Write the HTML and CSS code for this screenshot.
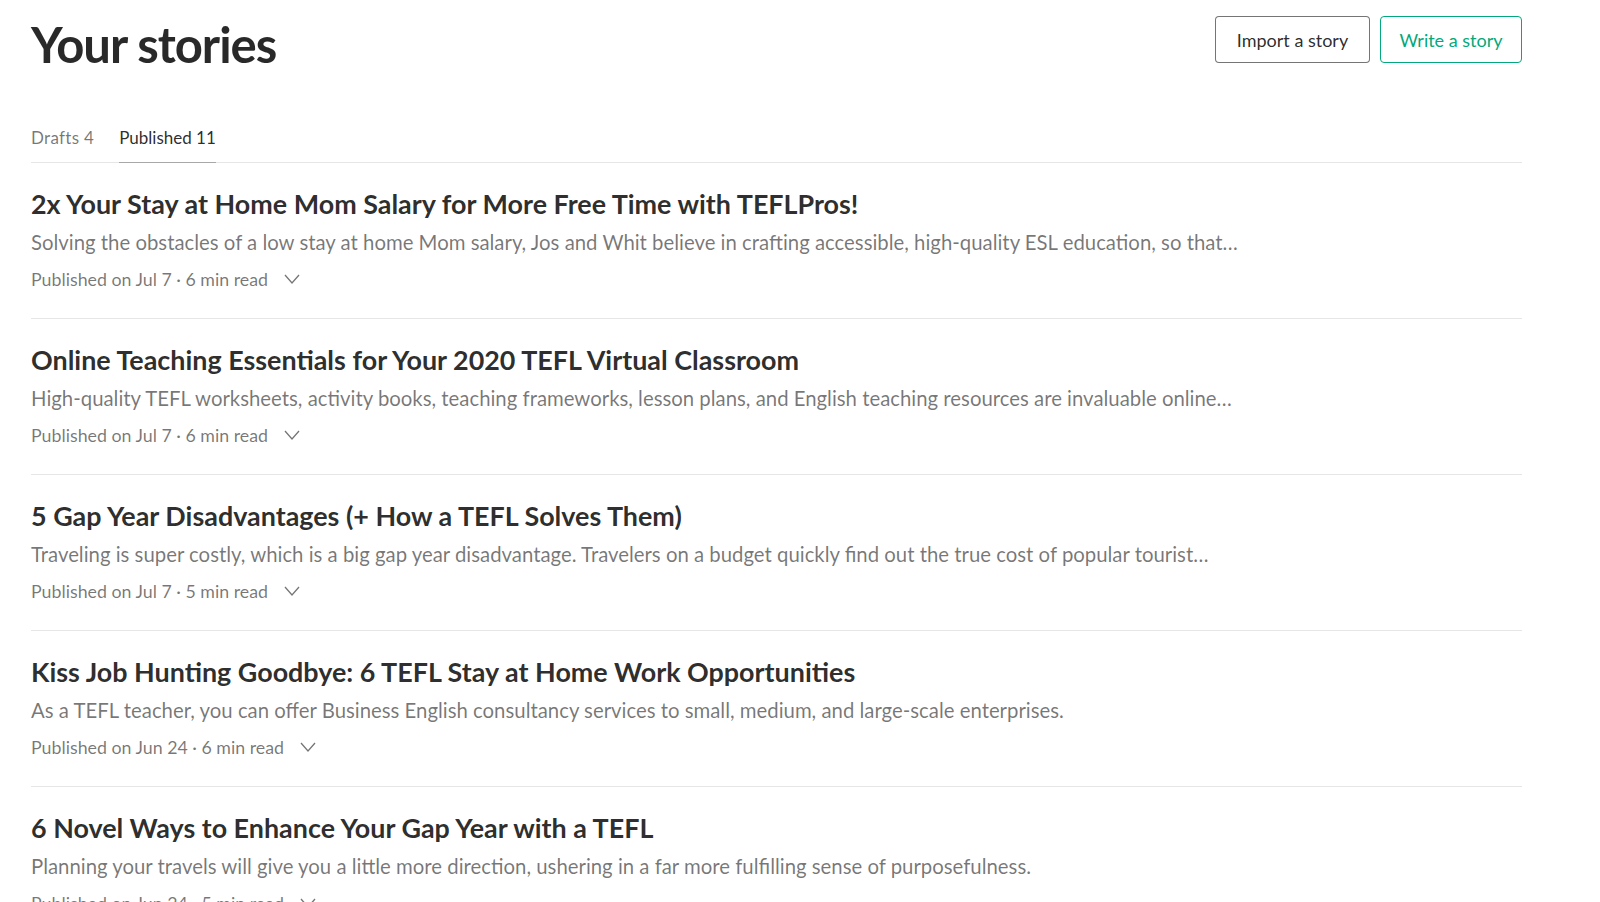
FILE: index.html
```html
<!DOCTYPE html>
<html lang="en">
<head>
    <meta charset="UTF-8">
    <meta name="viewport" content="width=device-width, initial-scale=1.0">
    <title>Your stories</title>
    <link rel="stylesheet" href="styles.css">
</head>
<body>
    <div class="page">
        <header class="page-header">
            <h1>Your stories</h1>
            <div class="actions">
                <button class="btn btn-import">Import a story</button>
                <button class="btn btn-green">Write a story</button>
            </div>
        </header>

        <nav class="tabs">
            <a class="tab" href="#">Drafts 4</a>
            <a class="tab active" href="#">Published 11</a>
        </nav>

        <ul class="stories">
            <li class="story">
                <h3>2x Your Stay at Home Mom Salary for More Free Time with TEFLPros!</h3>
                <p class="excerpt">Solving the obstacles of a low stay at home Mom salary, Jos and Whit believe in crafting accessible, high-quality ESL education, so that…</p>
                <div class="meta">Published on Jul 7 · 6 min read <svg class="chevron" width="16" height="10" viewBox="0 0 16 10"><polyline points="1,1 8,9 15,1"/></svg></div>
            </li>
            <li class="story">
                <h3>Online Teaching Essentials for Your 2020 TEFL Virtual Classroom</h3>
                <p class="excerpt">High-quality TEFL worksheets, activity books, teaching frameworks, lesson plans, and English teaching resources are invaluable online…</p>
                <div class="meta">Published on Jul 7 · 6 min read <svg class="chevron" width="16" height="10" viewBox="0 0 16 10"><polyline points="1,1 8,9 15,1"/></svg></div>
            </li>
            <li class="story">
                <h3>5 Gap Year Disadvantages (+ How a TEFL Solves Them)</h3>
                <p class="excerpt">Traveling is super costly, which is a big gap year disadvantage. Travelers on a budget quickly find out the true cost of popular tourist…</p>
                <div class="meta">Published on Jul 7 · 5 min read <svg class="chevron" width="16" height="10" viewBox="0 0 16 10"><polyline points="1,1 8,9 15,1"/></svg></div>
            </li>
            <li class="story">
                <h3>Kiss Job Hunting Goodbye: 6 TEFL Stay at Home Work Opportunities</h3>
                <p class="excerpt">As a TEFL teacher, you can offer Business English consultancy services to small, medium, and large-scale enterprises.</p>
                <div class="meta">Published on Jun 24 · 6 min read <svg class="chevron" width="16" height="10" viewBox="0 0 16 10"><polyline points="1,1 8,9 15,1"/></svg></div>
            </li>
            <li class="story">
                <h3>6 Novel Ways to Enhance Your Gap Year with a TEFL</h3>
                <p class="excerpt">Planning your travels will give you a little more direction, ushering in a far more fulfilling sense of purposefulness.</p>
                <div class="meta">Published on Jun 24 · 5 min read <svg class="chevron" width="16" height="10" viewBox="0 0 16 10"><polyline points="1,1 8,9 15,1"/></svg></div>
            </li>
        </ul>
    </div>
</body>
</html>
```

FILE: styles.css
```css
body {
    font-family: Lato, "Liberation Sans", sans-serif;
    background-color: #fff;
    color: rgba(0, 0, 0, 0.84);
    margin: 0;
}
.page {
    padding: 0 78px 0 31px;
}
.page-header {
    display: flex;
    justify-content: space-between;
    align-items: flex-start;
    padding-top: 16px;
}
h1 {
    margin: 0;
    font-size: 49px;
    line-height: 57px;
    font-weight: 700;
    letter-spacing: -1px;
}
.actions {
    display: flex;
    gap: 10px;
}
.btn {
    font-family: inherit;
    font-size: 18px;
    width: 142px;
    height: 47px;
    padding: 0;
    text-align: center;
    background: #fff;
    color: rgba(0, 0, 0, 0.84);
    border: 1px solid rgba(0, 0, 0, 0.54);
    border-radius: 4px;
    cursor: pointer;
}
.btn-import {
    width: 155px;
}
.btn-green {
    color: #03a87c;
    border-color: #03a87c;
}
.tabs {
    display: flex;
    gap: 25px;
    margin-top: 53px;
    border-bottom: 1px solid #e6e6e6;
}
.tab {
    font-size: 17px;
    line-height: 24px;
    padding-bottom: 12px;
    margin-bottom: -1px;
    color: rgba(0, 0, 0, 0.54);
    text-decoration: none;
    border-bottom: 1px solid transparent;
}
.tab:first-child {
    letter-spacing: 0.3px;
}
.tab.active {
    color: rgba(0, 0, 0, 0.84);
    border-bottom-color: #a8a8a8;
}
.stories {
    list-style: none;
    margin: 0;
    padding: 0;
}
.story {
    padding: 24px 0 27px;
    border-bottom: 1px solid #e6e6e6;
}
.story h3 {
    margin: 0;
    font-size: 26.9px;
    line-height: 34px;
    font-weight: 700;
}
.excerpt {
    margin: 7px 0 0;
    font-size: 20.35px;
    line-height: 28px;
    color: rgba(0, 0, 0, 0.54);
}
.meta {
    margin-top: 11px;
    font-size: 17.8px;
    line-height: 24px;
    color: rgba(0, 0, 0, 0.54);
    display: flex;
    align-items: center;
}
.chevron {
    margin-left: 16px;
    fill: none;
    stroke: rgba(0, 0, 0, 0.54);
    stroke-width: 1.3;
}
```
